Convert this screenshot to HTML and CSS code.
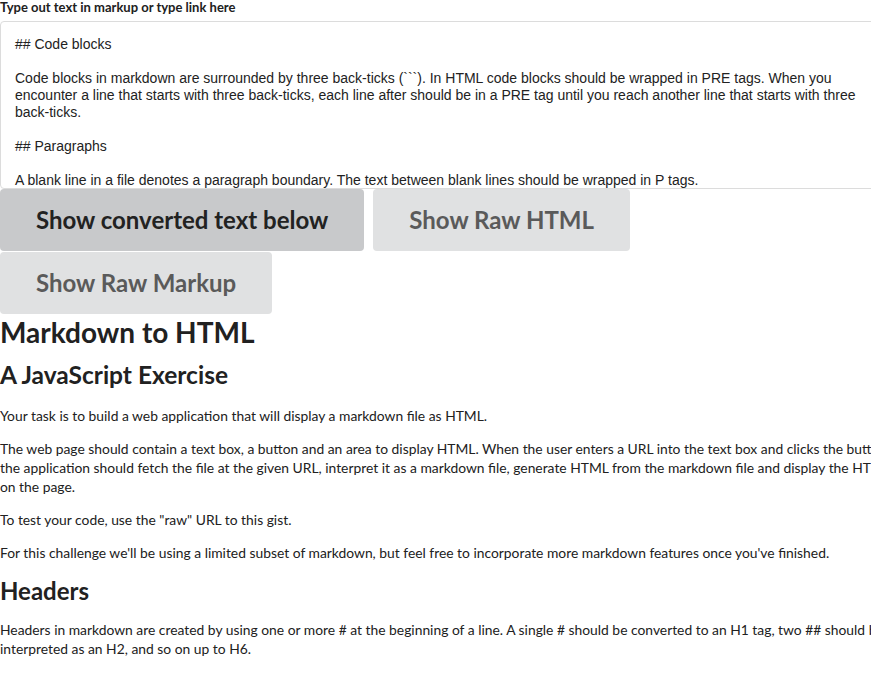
FILE: index.html
```html
<!DOCTYPE html>
<html lang="en">
<head>
<meta charset="utf-8">
<title>Markdown to HTML</title>
<link rel="stylesheet" href="styles.css">
</head>
<body>
<div class="page">
  <form class="form">
    <label class="field-label" for="md">Type out text in markup or type link here</label>
    <textarea id="md" class="md-input" rows="9">## Code blocks

Code blocks in markdown are surrounded by three back-ticks (```). In HTML code blocks should be wrapped in PRE tags. When you encounter a line that starts with three back-ticks, each line after should be in a PRE tag until you reach another line that starts with three back-ticks.

## Paragraphs

A blank line in a file denotes a paragraph boundary. The text between blank lines should be wrapped in P tags.</textarea>
  </form>
  <div class="buttons">
    <button type="button" class="btn active">Show converted text below</button>
    <button type="button" class="btn">Show Raw HTML</button>
    <button type="button" class="btn">Show Raw Markup</button>
  </div>
  <div class="output">
    <h1 class="h1">Markdown to HTML</h1>
    <h2 class="h2 h2-lead">A JavaScript Exercise</h2>
    <p class="para">Your task is to build a web application that will display a markdown file as HTML.</p>
    <p class="para">The web page should contain a text box, a button and an area to display HTML. When the user enters a URL into the text box and clicks the button, the application should fetch the file at the given URL, interpret it as a markdown file, generate HTML from the markdown file and display the HTML on the page.</p>
    <p class="para">To test your code, use the "raw" URL to this gist.</p>
    <p class="para">For this challenge we'll be using a limited subset of markdown, but feel free to incorporate more markdown features once you've finished.</p>
    <h2 class="h2">Headers</h2>
    <p class="para">Headers in markdown are created by using one or more # at the beginning of a line. A single # should be converted to an H1 tag, two ## should be interpreted as an H2, and so on up to H6.</p>
  </div>
</div>
</body>
</html>
```
FILE: styles.css
```css
html {
  overflow-x: hidden;
}
body {
  margin: 0;
  background: #ffffff;
  color: #212121;
  font-family: Lato, "Liberation Sans", sans-serif;
  font-size: 14px;
}
.page {
  width: 900px;
}
.form {
  display: flex;
  flex-direction: column;
  margin: 0;
}
.field-label {
  display: block;
  font-size: 13px;
  font-weight: 700;
  line-height: 15px;
  margin-bottom: 6px;
  color: #212121;
}
.md-input {
  display: block;
  box-sizing: border-box;
  width: 100%;
  height: 168px;
  margin: 0;
  padding: 14px 14px 12px;
  border: 1px solid #dcdcdc;
  border-radius: 4px;
  font-family: "Liberation Sans", Arial, sans-serif;
  font-size: 14px;
  line-height: 17px;
  color: #222;
  resize: none;
  overflow: hidden;
  outline: none;
}
.buttons {
  display: flex;
  flex-wrap: wrap;
  gap: 1px 9px;
}
.btn {
  font-family: Lato, "Liberation Sans", sans-serif;
  font-size: 24px;
  font-weight: 700;
  line-height: 24px;
  padding: 19px 36px;
  border: 0;
  border-radius: 4px;
  background: #e0e1e2;
  color: #5a5a5a;
  cursor: pointer;
}
.btn.active {
  background: #c8c9cb;
  color: #222;
}
.output {
  padding-bottom: 10px;
}
.h1 {
  font-size: 28px;
  font-weight: 700;
  line-height: 36px;
  margin: 0 0 10px;
}
.h2 {
  font-size: 24px;
  font-weight: 700;
  line-height: 30px;
  margin: 0 0 14px;
}
.h2-lead {
  font-size: 24.5px;
  margin-bottom: 16px;
}
.para {
  font-size: 13.85px;
  line-height: 19px;
  margin: 0 0 14px;
}
```
